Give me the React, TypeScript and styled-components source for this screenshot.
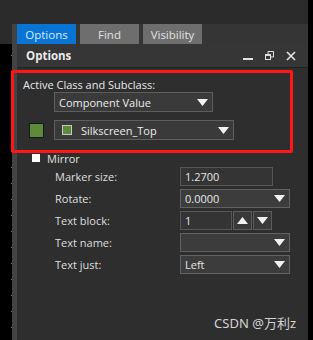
import React from "react";
import styled, { createGlobalStyle } from "styled-components";

const Global = createGlobalStyle`
  html, body { margin: 0; padding: 0; background: #000; }
  body { font-family: "Open Sans", "Noto Sans", sans-serif; }
  * { box-sizing: border-box; }
`;

const Screen = styled.div`
  width: 313px;
  height: 340px;
  display: flex;
  background: #000;
  overflow: hidden;
  position: relative;
`;

const Main = styled.div`
  width: 308px;
  display: flex;
  flex-direction: column;
`;

const TopStrip = styled.div`
  height: 24px;
  background: #2b2b2b;
`;

const Body = styled.div`
  flex: 1;
  display: flex;
`;

const Gutter = styled.div`
  width: 12px;
  background:
    linear-gradient(#2b2b2b, #2b2b2b) top / 12px 20px no-repeat,
    repeating-linear-gradient(to bottom, transparent 0 15px, #777 15px 16px) 11px 0 / 1px 100% no-repeat,
    #000;
`;

const Panel = styled.div`
  flex: 1;
  display: flex;
  flex-direction: column;
  border-left: 5px solid #434343;
  background: #2e2e2e;
`;

const TabBar = styled.div`
  height: 20px;
  display: flex;
  gap: 4px;
  background: #353535;
`;

const Tab = styled.div<{ $active?: boolean }>`
  width: 59px;
  height: 20px;
  display: flex;
  align-items: center;
  justify-content: center;
  font-size: 11.5px;
  color: ${(p) => (p.$active ? "#d6e8fa" : "#e2e2e2")};
  background: ${(p) => (p.$active ? "#0a74d4" : "#6e6e6e")};
`;

const TitleBar = styled.div`
  height: 24px;
  display: flex;
  align-items: center;
  padding-left: 9px;
  padding-right: 12px;
  background: #363636;
  border-bottom: 1px solid #222;
`;

const Title = styled.div`
  flex: 1;
  font-size: 11.5px;
  font-weight: 700;
  color: #eaeaea;
`;

const TitleIcons = styled.div`
  display: flex;
  align-items: center;
  gap: 12px;
  svg { display: block; }
`;

const Content = styled.div`
  flex: 1;
  display: flex;
  flex-direction: column;
  padding: 9px 0 0 6px;
  color: #e6e6e6;
  font-size: 11px;
`;

const Caption = styled.div`
  height: 15px;
  line-height: 15px;
  font-size: 11px;
  color: #e8e8e8;
`;

const ClassRow = styled.div<{ $indent: number; $top: number }>`
  display: flex;
  align-items: center;
  margin-top: ${(p) => p.$top}px;
  padding-left: ${(p) => p.$indent}px;
`;

const Swatch = styled.div`
  width: 15px;
  height: 15px;
  background: #5d8b39;
  border: 1px solid #181818;
  margin-right: 10px;
`;

const Select = styled.div<{ $w: number }>`
  width: ${(p) => p.$w}px;
  height: 20px;
  display: flex;
  align-items: center;
  padding: 0 4px 0 4px;
  background: #3a3a3a;
  border: 1px solid #5e5e5e;
  font-size: 11px;
  color: #ececec;
`;

const SelectText = styled.div`
  flex: 1;
  white-space: nowrap;
`;

const LayerBox = styled.div`
  width: 10px;
  height: 10px;
  background: #5d8b39;
  border: 1px solid #c8c8c8;
  margin: 0 9px 0 3px;
`;

const Arrow = () => (
  <svg width="11" height="7" viewBox="0 0 11 7">
    <path d="M0 0H11L5.5 7Z" fill="#f2f2f2" />
  </svg>
);

const Up = () => (
  <svg width="11" height="7" viewBox="0 0 11 7">
    <path d="M0 7H11L5.5 0Z" fill="#f2f2f2" />
  </svg>
);

const MirrorRow = styled.div`
  display: flex;
  align-items: center;
  margin-top: 12px;
  padding-left: 9px;
  height: 12px;
  font-size: 11px;
  color: #e0e0e0;
`;

const Check = styled.div`
  width: 8px;
  height: 8px;
  background: #fff;
  margin-right: 7px;
`;

const Form = styled.div`
  display: flex;
  flex-direction: column;
  gap: 3px;
  margin-top: 3px;
`;

const FormRow = styled.div`
  display: flex;
  align-items: center;
  height: 19px;
  padding-left: 32px;
`;

const Label = styled.div`
  width: 125px;
  font-size: 11px;
  color: #dedede;
`;

const Field = styled.div<{ $w: number; $kind: "input" | "select" }>`
  width: ${(p) => p.$w}px;
  height: 19px;
  display: flex;
  align-items: center;
  padding: 0 4px;
  font-size: 11px;
  color: #e6e6e6;
  background: ${(p) => (p.$kind === "input" ? "#343434" : "#3c3c3c")};
  border: 1px solid ${(p) => (p.$kind === "input" ? "#575757" : "#626262")};
`;

const Spin = styled.div`
  width: 19px;
  height: 19px;
  display: flex;
  align-items: center;
  justify-content: center;
  background: #393939;
  border: 1px solid #5c5c5c;
  margin-left: 1px;
`;

const Highlight = styled.div`
  position: absolute;
  left: 11px;
  top: 70px;
  width: 282px;
  height: 83px;
  border: 3px solid #ff1616;
  border-radius: 2px;
  pointer-events: none;
`;

const Watermark = styled.div`
  position: absolute;
  right: 17px;
  bottom: 8px;
  font-family: "Noto Sans", "Noto Sans CJK SC", sans-serif;
  font-size: 13px;
  color: #d4d4d4;
`;

export default function App() {
  return (
    <>
      <Global />
      <Screen>
        <Main>
          <TopStrip />
          <Body>
            <Gutter />
            <Panel>
              <TabBar>
                <Tab $active>Options</Tab>
                <Tab>Find</Tab>
                <Tab>Visibility</Tab>
              </TabBar>
              <TitleBar>
                <Title>Options</Title>
                <TitleIcons>
                  <svg width="10" height="10" viewBox="0 0 10 10">
                    <rect x="0" y="7" width="10" height="2" fill="#e0e0e0" />
                  </svg>
                  <svg width="9" height="9" viewBox="0 0 9 9">
                    <rect x="0.5" y="3.5" width="5" height="5" fill="none" stroke="#e0e0e0" />
                    <path d="M3 3V0.5H8.5V6H6" fill="none" stroke="#e0e0e0" />
                    <rect x="0.5" y="3.5" width="5" height="1.5" fill="#e0e0e0" />
                  </svg>
                  <svg width="10" height="10" viewBox="0 0 10 10">
                    <path d="M1 1L9 9M9 1L1 9" stroke="#e6e6e6" strokeWidth="1.6" />
                  </svg>
                </TitleIcons>
              </TitleBar>
              <Content>
                <Caption>Active Class and Subclass:</Caption>
                <ClassRow $indent={31} $top={0}>
                  <Select $w={159}>
                    <SelectText>Component Value</SelectText>
                    <Arrow />
                  </Select>
                </ClassRow>
                <ClassRow $indent={6} $top={8}>
                  <Swatch />
                  <Select $w={180}>
                    <LayerBox />
                    <SelectText>Silkscreen_Top</SelectText>
                    <Arrow />
                  </Select>
                </ClassRow>
                <MirrorRow>
                  <Check />
                  Mirror
                </MirrorRow>
                <Form>
                  <FormRow>
                    <Label>Marker size:</Label>
                    <Field $w={93} $kind="input">1.2700</Field>
                  </FormRow>
                  <FormRow>
                    <Label>Rotate:</Label>
                    <Field $w={110} $kind="select">
                      <SelectText>0.0000</SelectText>
                      <Arrow />
                    </Field>
                  </FormRow>
                  <FormRow>
                    <Label>Text block:</Label>
                    <Field $w={52} $kind="input">1</Field>
                    <Spin><Up /></Spin>
                    <Spin><Arrow /></Spin>
                  </FormRow>
                  <FormRow>
                    <Label>Text name:</Label>
                    <Field $w={110} $kind="select">
                      <SelectText />
                      <Arrow />
                    </Field>
                  </FormRow>
                  <FormRow>
                    <Label>Text just:</Label>
                    <Field $w={110} $kind="select">
                      <SelectText>Left</SelectText>
                      <Arrow />
                    </Field>
                  </FormRow>
                </Form>
              </Content>
            </Panel>
          </Body>
        </Main>
        <Highlight />
        <Watermark>CSDN @万利z</Watermark>
      </Screen>
    </>
  );
}
